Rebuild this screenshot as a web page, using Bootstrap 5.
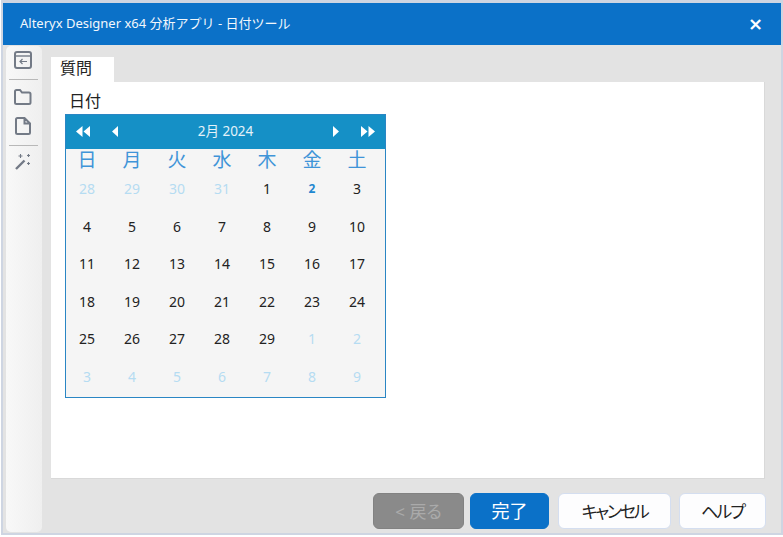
<!DOCTYPE html>
<html lang="ja">
<head>
  <meta charset="UTF-8">
  <title>日付ツール</title>
  <link href="https://cdn.jsdelivr.net/npm/bootstrap@5.3.2/dist/css/bootstrap.min.css" rel="stylesheet">
  <style>
    html, body { height: 537px; overflow: hidden; }
    body { background: #fff; padding: 0 0 0 1px; font-family: "Noto Sans", "Noto Sans CJK JP", sans-serif; color: #222; }
    .app-window { height: 535px; background: #e3e3e3; border-style: solid; border-width: 3px 2px 2px 2px; border-color: #ced5e2; }
    .title-bar { height: 42px; background: #0b71c8; color: #f2f7fc; font-size: 13px; padding: 0 18px 0 17px; }
    .close-x { font-size: 18px; font-weight: 700; line-height: 1; color: #fff; font-family: "DejaVu Sans", sans-serif; }
    .tool-rail { width: 36px; height: 486px; margin: 1px 0 0 3px; background: linear-gradient(90deg, #f8f8f8, #efefef); border-radius: 5px; padding-top: 4px; }
    .tool-rail svg { display: block; margin-left: 7px; }
    .rail-rule { width: 29px; height: 1px; background: #b8b8b8; margin: 9px 0 7px 3px; }
    .rail-gap { margin-top: 9px !important; }
    .rail-wand { margin-top: -2px; }
    .work-area { width: 714px; margin-left: 9px; }
    .tab-head { width: 63px; height: 25px; margin-top: 12px; background: #fff; font-size: 16px; padding-left: 9px; line-height: 22px; }
    .tool-panel { width: 714px; height: 397px; background: #fff; border-right: 1px solid #d9d9d9; border-bottom: 1px solid #d9d9d9; padding: 9px 14px; }
    .date-label { font-size: 16px; line-height: 21px; height: 23px; padding-left: 4px; }
    .cal-frame { width: 321px; height: 284px; background: #2a86c4; padding: 1px; }
    .cal-inner { height: 282px; background: #f5f5f5; }
    .cal-head { height: 34px; padding-bottom: 2px; background: #1590c6; color: #e4f2f9; font-size: 13.5px; }
    .cal-nav { width: 32px; }
    .cal-nav svg { display: block; margin: 0 auto; }
    .nav-out-l { margin-left: 1px; }
    .nav-out-r { margin-right: 1px; }
    .cal-grid { display: grid; grid-template-columns: repeat(7, 45px); grid-template-rows: 22px repeat(6, 37.6px); margin-left: -1.5px; text-align: center; font-size: 14px; color: #222; }
    .cal-grid > div { line-height: 35px; }
    .cal-grid .wk { font-size: 19px; line-height: 23px; color: #3f94d8; }
    .cal-grid .dim { color: #b5dcf2; }
    .cal-grid .now { color: #1f87d0; font-weight: 700; font-size: 12px; }
    .foot-row { height: 58px; width: 715px; padding-top: 14px; gap: 8px; }
    .foot-btn { height: 36px; font-size: 17px; font-feature-settings: "palt"; border-radius: 6px; padding: 0; line-height: 1; color: #222; background: #fdfdfe; border: 1px solid #d4def0; }
    .foot-btn.back { width: 91px; background: #8a8a8a; border-color: #828282; color: #aaa; opacity: 1; }
    .foot-btn.done { width: 79px; margin: 0 1px 0 -2px; font-size: 18px; background: #0b71c8; border-color: #0b71c8; color: #fff; }
    .foot-btn.cancel { width: 113px; letter-spacing: -2.2px; }
    .foot-btn.help { width: 87px; letter-spacing: -2px; }
  </style>
</head>
<body>

<div class="app-window">
  <div class="title-bar d-flex align-items-center justify-content-between">
    <span>Alteryx Designer x64 分析アプリ - 日付ツール</span>
    <span class="close-x">×</span>
  </div>

  <div class="d-flex">
    <div class="tool-rail flex-shrink-0">
      <svg width="20" height="20" viewBox="0 0 20 20" fill="none" stroke="#737a86" stroke-width="2"><rect x="2" y="2" width="16" height="16" rx="2"/><path d="M2 6h16" stroke-width="1.4"/><path d="M14 11.500H7M9.500 9 7 11.500 9.500 14" stroke-width="1.2"/></svg>
      <div class="rail-rule"></div>
      <svg width="20" height="20" viewBox="0 0 20 20" fill="none" stroke="#737a86" stroke-width="2"><path d="M2 15.500v-11a1.500 1.500 0 0 1 1.500-1.500h3.500l2 2.500h7a1.500 1.500 0 0 1 1.500 1.500v8.500a1.500 1.500 0 0 1-1.500 1.500h-12.500a1.500 1.500 0 0 1-1.500-1.500z"/></svg>
      <svg class="rail-gap" width="20" height="20" viewBox="0 0 20 20" fill="none" stroke="#737a86" stroke-width="2"><path d="M3 3.500a1.500 1.500 0 0 1 1.500-1.500h7l5.500 5.500v9a1.500 1.500 0 0 1-1.500 1.500h-11a1.500 1.500 0 0 1-1.500-1.500zM11.500 2v5.500h5.500"/></svg>
      <div class="rail-rule"></div>
      <svg class="rail-wand" width="20" height="20" viewBox="0 0 20 20" fill="none" stroke="#737a86"><path d="M3 18 11.500 9.500" stroke-width="2.400"/><path d="M7.500 3v4M5.500 5h4M15.500 3v3M14 4.500h3M15.500 11v3M14 12.500h3" stroke-width="1.100"/></svg>
    </div>

    <div class="work-area">
      <div class="tab-head">質問</div>
      <div class="tool-panel">
        <div class="date-label">日付</div>
        <div class="cal-frame">
          <div class="cal-inner">
            <div class="cal-head d-flex align-items-center">
              <div class="cal-nav nav-out-l">
                <svg width="16" height="11" viewBox="0 0 16 11" fill="#fff"><path d="M7.500 0v11L1 5.500zM15 0v11L8.500 5.500z"/></svg>
              </div>
              <div class="cal-nav">
                <svg width="8" height="11" viewBox="0 0 8 11" fill="#fff"><path d="M7 0v11L1 5.500z"/></svg>
              </div>
              <div class="flex-grow-1 text-center">2月 2024</div>
              <div class="cal-nav">
                <svg width="8" height="11" viewBox="0 0 8 11" fill="#fff"><path d="M1 0v11l6-5.500z"/></svg>
              </div>
              <div class="cal-nav nav-out-r">
                <svg width="16" height="11" viewBox="0 0 16 11" fill="#fff"><path d="M1 0v11l6.500-5.500zM8.500 0v11l6.500-5.500z"/></svg>
              </div>
            </div>
            <div class="cal-grid">
              <div class="wk">日</div><div class="wk">月</div><div class="wk">火</div><div class="wk">水</div><div class="wk">木</div><div class="wk">金</div><div class="wk">土</div>
              <div class="dim">28</div><div class="dim">29</div><div class="dim">30</div><div class="dim">31</div><div>1</div><div class="now">2</div><div>3</div>
              <div>4</div><div>5</div><div>6</div><div>7</div><div>8</div><div>9</div><div>10</div>
              <div>11</div><div>12</div><div>13</div><div>14</div><div>15</div><div>16</div><div>17</div>
              <div>18</div><div>19</div><div>20</div><div>21</div><div>22</div><div>23</div><div>24</div>
              <div>25</div><div>26</div><div>27</div><div>28</div><div>29</div><div class="dim">1</div><div class="dim">2</div>
              <div class="dim">3</div><div class="dim">4</div><div class="dim">5</div><div class="dim">6</div><div class="dim">7</div><div class="dim">8</div><div class="dim">9</div>
            </div>
          </div>
        </div>
      </div>
      <div class="foot-row d-flex justify-content-end">
        <button class="btn foot-btn back" disabled>&lt; 戻る</button>
        <button class="btn foot-btn done">完了</button>
        <button class="btn foot-btn cancel">キャンセル</button>
        <button class="btn foot-btn help">ヘルプ</button>
      </div>
    </div>
  </div>
</div>

<script src="https://cdn.jsdelivr.net/npm/bootstrap@5.3.2/dist/js/bootstrap.bundle.min.js"></script>
</body>
</html>
